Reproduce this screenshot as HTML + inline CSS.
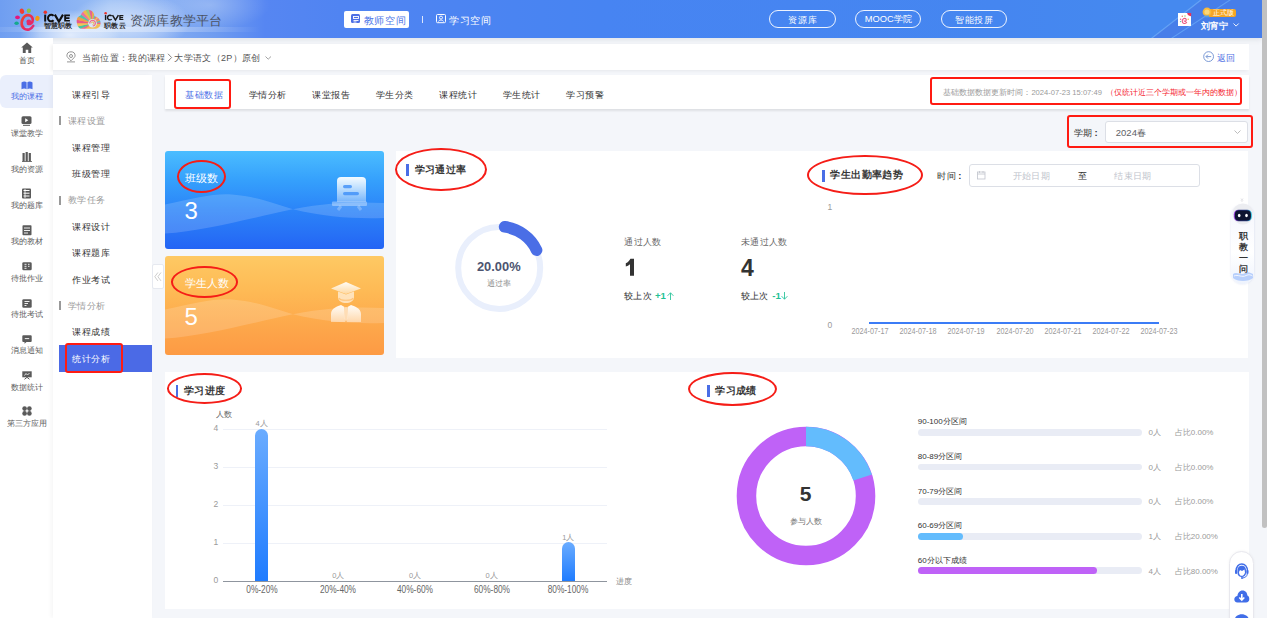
<!DOCTYPE html>
<html><head><meta charset="utf-8"><style>
html,body{margin:0;padding:0;width:1267px;height:618px;overflow:hidden;background:#f4f6fa;font-family:"Liberation Sans",sans-serif}
.t{position:absolute;white-space:nowrap;line-height:1}
.r{position:absolute}
svg.r{overflow:visible}
</style></head><body>
<div class="r" style="left:0;top:0;width:1262px;height:38px;background:linear-gradient(90deg,#6f9ef1 0px,#84aef3 50px,#98bdf5 110px,#84adf3 160px,#6f9cf0 215px,#5686f2 265px,#5084f2 340px,#4784f2 600px,#4586f0 1000px,#4589ef 1150px,#4589ef 1262px);overflow:hidden;box-shadow:0 2px 5px rgba(60,70,90,.10)">
<div style="position:absolute;left:20px;top:10px;width:100px;height:50px;border-radius:50%;background:radial-gradient(closest-side,rgba(255,255,255,.75),rgba(255,255,255,.4) 60%,rgba(255,255,255,0))"></div>
<div style="position:absolute;left:70px;top:-8px;width:120px;height:60px;border-radius:50%;background:radial-gradient(closest-side,rgba(255,255,255,.55),rgba(255,255,255,.25) 65%,rgba(255,255,255,0))"></div>
<div style="position:absolute;left:150px;top:-20px;width:120px;height:50px;border-radius:50%;background:radial-gradient(closest-side,rgba(255,255,255,.25),rgba(255,255,255,0))"></div>
<div style="position:absolute;left:-20px;top:27px;width:280px;height:5px;background:linear-gradient(90deg,rgba(255,255,255,0),rgba(255,255,255,.3) 30%,rgba(255,255,255,.3) 70%,rgba(255,255,255,0))"></div>
<div style="position:absolute;left:0;top:0;width:1262px;height:38px;background:#477ee9;clip-path:polygon(1201px 0,1262px 0,1262px 38px,1152px 38px)"></div>
<div style="position:absolute;left:0;top:0;width:1262px;height:38px;background:rgba(140,200,255,.45);clip-path:polygon(1200px 0,1202px 0,1153px 38px,1151px 38px)"></div>
<div style="position:absolute;left:0;top:0;width:1262px;height:38px;background:rgba(120,190,255,.5);clip-path:polygon(1229px 0,1231px 0,1173px 38px,1171px 38px)"></div>
</div>
<svg class="r" style="left:12px;top:6px;" width="34" height="27" viewBox="0 0 34 27"><defs><linearGradient id="eg" x1="0" y1="0" x2="1" y2="1"><stop offset="0" stop-color="#ef4a28"/><stop offset=".6" stop-color="#e8285e"/><stop offset="1" stop-color="#e0307a"/></linearGradient></defs>
<ellipse cx="9.9" cy="5.3" rx="2.2" ry="2.7" transform="rotate(-20 9.9 5.3)" fill="#ee3f35"/>
<ellipse cx="16.8" cy="4.8" rx="2.1" ry="2.3" fill="#8dc341"/>
<ellipse cx="5.5" cy="11.4" rx="2.4" ry="1.8" fill="#e4157e"/>
<ellipse cx="25.4" cy="12.4" rx="2.2" ry="2.5" transform="rotate(20 25.4 12.4)" fill="#f59a10"/>
<ellipse cx="4.6" cy="17.2" rx="2.2" ry="1.8" fill="#14a98e"/>
<path d="M21.3 19.8 C19.5 23.5 15 24.8 12 22.5 C8.5 19.8 9 13 13 10 C16.5 7.8 20.8 10 20.8 14 C20.8 17.3 17.8 18.5 16 17.8" fill="none" stroke="url(#eg)" stroke-width="2.6" stroke-linecap="round"/>
<circle cx="16.8" cy="15.8" r="2.4" fill="#e4286a"/></svg>
<svg class="r" style="left:43px;top:9px" width="28" height="14"><g transform="translate(0 0) scale(1)"><circle cx="2.3" cy="3.2" r="1.75" fill="#e8342a"/>
<rect x="1.2" y="5.6" width="2" height="7" fill="#111"/>
<path d="M10.6 6.9 A3.25 3.25 0 1 0 10.6 11.3" fill="none" stroke="#111" stroke-width="2"/>
<path d="M11.8 5.6 L15.9 12.6 L20 5.6" fill="none" stroke="#111" stroke-width="2.1" stroke-linejoin="miter"/>
<path d="M21.2 5.6 H26.9 V7.2 H23.1 V8.3 H26.5 V9.9 H23.1 V11 H26.9 V12.6 H21.2Z" fill="#111"/></g></svg>
<div class="t" style="left:43.8px;top:23.0px;font-size:6.5px;color:#2a2a2a;font-weight:bold;letter-spacing:0.1px;">智慧职教</div>
<svg class="r" style="left:76px;top:9px;" width="26" height="21" viewBox="0 0 26 21"><defs><clipPath id="shc"><path d="M1 14.5 C-.2 10 1.8 7.2 4.6 6.5 C6 2.5 9.5 .4 12.5 .7 C16 1 18.2 3.8 18.4 7.2 C21.5 7.5 24.6 10.5 24.6 14 C24.6 17.8 22 19.8 18.5 19.8 L6 19.8 C3 19.8 1.5 17.5 1 14.5Z"/></clipPath></defs>
<g clip-path="url(#shc)" opacity=".92"><rect x="0" y="0" width="26" height="21" fill="#f3b94a"/><path d="M16.5 14.2 L3.64 29.52 L0.53 26.24Z" fill="#f4b63a"/><path d="M16.5 14.2 L0.63 26.38 L-1.70 22.49Z" fill="#ee5a8a"/><path d="M16.5 14.2 L-1.63 22.65 L-3.06 18.36Z" fill="#3ec09c"/><path d="M16.5 14.2 L-3.03 18.53 L-3.50 14.03Z" fill="#f6c04a"/><path d="M16.5 14.2 L-3.50 14.20 L-2.99 9.70Z" fill="#ec4f80"/><path d="M16.5 14.2 L-3.03 9.87 L-1.55 5.59Z" fill="#f39a3a"/><path d="M16.5 14.2 L-1.63 5.75 L0.74 1.89Z" fill="#45c0a8"/><path d="M16.5 14.2 L0.63 2.02 L3.78 -1.23Z" fill="#ef6a9a"/><path d="M16.5 14.2 L3.64 -1.12 L7.42 -3.62Z" fill="#f5b640"/><path d="M16.5 14.2 L7.27 -3.54 L11.49 -5.16Z" fill="#9ad068"/><path d="M16.5 14.2 L11.32 -5.12 L15.80 -5.79Z" fill="#ea5a8a"/><path d="M16.5 14.2 L15.63 -5.78 L20.14 -5.47Z" fill="#f3a23e"/><path d="M16.5 14.2 L19.97 -5.50 L24.31 -4.21Z" fill="#48bfb0"/><path d="M16.5 14.2 L24.15 -4.28 L28.11 -2.08Z" fill="#ee5a8a"/><path d="M16.5 14.2 L27.97 -2.18 L31.36 0.82Z" fill="#f6c44a"/><path d="M16.5 14.2 L31.25 0.69 L33.91 4.35Z" fill="#eb6a90"/><path d="M16.5 14.2 L33.82 4.20 L35.63 8.35Z" fill="#f0a040"/><path d="M16.5 14.2 L35.57 8.19 L36.44 12.63Z" fill="#47b8c8"/><path d="M16.5 14.2 L36.42 12.46 L36.31 16.98Z" fill="#ef5a8a"/><path d="M16.5 14.2 L36.33 16.81 L35.23 21.20Z" fill="#f4be48"/></g>
<circle cx="16.5" cy="14.2" r="4.3" fill="#d8e8f8"/><path d="M13.8 14.5 A2.8 2.8 0 1 1 16.8 17" stroke="#ef6a8a" stroke-width="1.2" fill="none"/><path d="M15.5 14.2 A1.2 1.2 0 1 1 16.6 15.4" stroke="#f2b53a" stroke-width="1" fill="none"/></svg>
<svg class="r" style="left:103.5px;top:10.5px" width="21" height="12"><g transform="translate(0 0) scale(0.72)"><circle cx="2.3" cy="3.2" r="1.75" fill="#e8342a"/>
<rect x="1.2" y="5.6" width="2" height="7" fill="#1a1a1a"/>
<path d="M10.6 6.9 A3.25 3.25 0 1 0 10.6 11.3" fill="none" stroke="#1a1a1a" stroke-width="2"/>
<path d="M11.8 5.6 L15.9 12.6 L20 5.6" fill="none" stroke="#1a1a1a" stroke-width="2.1" stroke-linejoin="miter"/>
<path d="M21.2 5.6 H26.9 V7.2 H23.1 V8.3 H26.5 V9.9 H23.1 V11 H26.9 V12.6 H21.2Z" fill="#1a1a1a"/></g></svg>
<div class="t" style="left:104.2px;top:23.0px;font-size:6.5px;color:#2a2a2a;font-weight:bold;letter-spacing:0.2px;">职教云</div>
<div class="t" style="left:130.0px;top:14.0px;font-size:13px;color:#4b5263;letter-spacing:0.2px;">资源库教学平台</div>
<div class="r" style="left:344.4px;top:11.0px;width:64.4px;height:16.5px;background:#fff;border-radius:2px"></div>
<div class="r" style="left:351.2px;top:14.4px;width:9.0px;height:9.0px;background:#4d6fe4;border-radius:1.5px"></div>
<svg class="r" style="left:351px;top:14px;" width="10" height="10" viewBox="0 0 10 10"><rect x="2.5" y="2.5" width="5" height="2" fill="none" stroke="#fff" stroke-width=".9"/><path d="M2.5 6.5h5M2.5 8h3" stroke="#fff" stroke-width=".9"/></svg>
<div class="t" style="left:363.8px;top:16.0px;font-size:10px;color:#4f78e8;font-weight:500;letter-spacing:0.7px;">教师空间</div>
<div class="r" style="left:422.0px;top:16.4px;width:1.0px;height:6.7px;background:rgba(255,255,255,.8);"></div>
<svg class="r" style="left:436px;top:14.4px;" width="10" height="9.2" viewBox="0 0 10 9.2"><rect x=".5" y=".5" width="9" height="8.2" rx="1" fill="none" stroke="#fff" stroke-width="1"/><circle cx="5" cy="3.6" r="1.5" fill="none" stroke="#fff" stroke-width=".9"/><path d="M2.5 7.5 C3 5.5 7 5.5 7.5 7.5" fill="none" stroke="#fff" stroke-width=".9"/></svg>
<div class="t" style="left:449.0px;top:16.0px;font-size:10px;color:#fff;font-weight:500;letter-spacing:0.7px;">学习空间</div>
<div class="r" style="left:769.2px;top:10.1px;width:66.7px;height:17.5px;border:1px solid rgba(255,255,255,.9);border-radius:9px;box-sizing:border-box"></div>
<div class="r" style="left:855px;top:10.1px;width:66.1px;height:17.5px;border:1px solid rgba(255,255,255,.9);border-radius:9px;box-sizing:border-box"></div>
<div class="r" style="left:940.6px;top:10.1px;width:66.3px;height:17.5px;border:1px solid rgba(255,255,255,.9);border-radius:9px;box-sizing:border-box"></div>
<div class="t" style="left:788.3px;top:16.0px;font-size:9px;color:#fff;font-weight:500;letter-spacing:0.7px;">资源库</div>
<div class="t" style="left:864.7px;top:15.3px;font-size:9.3px;color:#fff">MOOC<span style="font-size:9px;letter-spacing:.6px;font-weight:500">学院</span></div>
<div class="t" style="left:955.0px;top:16.0px;font-size:9px;color:#fff;font-weight:500;letter-spacing:0.5px;">智能投屏</div>
<div class="r" style="left:1178.0px;top:12.5px;width:13.2px;height:13.3px;background:#fff;"></div>
<svg class="r" style="left:1178px;top:12.5px;" width="13.2" height="13.3" viewBox="0 0 13.2 13.3"><circle cx="4.3" cy="3.3" r=".75" fill="#f07a6a"/><circle cx="7" cy="3" r=".75" fill="#9ad06a"/><circle cx="2.6" cy="6.2" r=".75" fill="#ec5aa0"/><circle cx="10.2" cy="6.3" r=".75" fill="#f5b04a"/><circle cx="2.6" cy="8.6" r=".7" fill="#4cc0a0"/><path d="M8.8 9 C8 10.8 5.5 11 4.6 9.4 C3.6 7.6 4.8 5.4 6.6 5.4 C8.2 5.4 8.8 7 7.8 8 C7 8.8 6 8.2 6.2 7.4" fill="none" stroke="#ea5a82" stroke-width="1.1"/><path d="M9.2 0 H13.2 V3.2 C12 3.2 9.2 2.2 9.2 0Z" fill="#e8325a"/></svg>
<div class="r" style="left:1209.0px;top:8.9px;width:27.4px;height:7.7px;background:#f5a623;border-radius:0 2px 2px 0"></div>
<svg class="r" style="left:1201.5px;top:6.8px;" width="10" height="11" viewBox="0 0 10 11"><circle cx="5" cy="5" r="4.4" fill="#f9b93a"/><circle cx="5" cy="5" r="2.6" fill="#fcd77a"/><path d="M3 8.5 L2.5 10.8 L4 10 L5 10.8 L6 10 L7.5 10.8 L7 8.5z" fill="#5aa0e0"/></svg>
<div class="t" style="left:1212.5px;top:10.0px;font-size:6.5px;color:#fff;">正式版</div>
<div class="t" style="left:1201.0px;top:22.0px;font-size:9px;color:#fff;font-weight:bold;letter-spacing:0.1px;">刘宵宁</div>
<svg class="r" style="left:1233.3px;top:23px;" width="6.2" height="4" viewBox="0 0 6.2 4"><path d="M.5 .5 L3.1 3.1 L5.7 .5" fill="none" stroke="#fff" stroke-width=".9"/></svg>
<div class="r" style="left:1262.2px;top:0.0px;width:4.8px;height:527.7px;background:#c1c1c1;border-radius:0 0 2.5px 2.5px"></div>
<div class="r" style="left:0.0px;top:38.0px;width:53.0px;height:580.0px;background:#fff;"></div>
<div class="r" style="left:0.0px;top:74.6px;width:53.0px;height:33.0px;background:#eaeffc;border-radius:6px 0 0 6px"></div>
<div class="t" style="left:18.5px;top:57.0px;font-size:8px;color:#5c5c5c;">首页</div>
<div class="t" style="left:10.5px;top:93.0px;font-size:8px;color:#4a6ee6;">我的课程</div>
<div class="t" style="left:10.5px;top:130.0px;font-size:8px;color:#5c5c5c;">课堂教学</div>
<div class="t" style="left:10.5px;top:166.0px;font-size:8px;color:#5c5c5c;">我的资源</div>
<div class="t" style="left:10.5px;top:202.0px;font-size:8px;color:#5c5c5c;">我的题库</div>
<div class="t" style="left:10.5px;top:238.0px;font-size:8px;color:#5c5c5c;">我的教材</div>
<div class="t" style="left:10.5px;top:275.0px;font-size:8px;color:#5c5c5c;">待批作业</div>
<div class="t" style="left:10.5px;top:311.0px;font-size:8px;color:#5c5c5c;">待批考试</div>
<div class="t" style="left:10.5px;top:347.0px;font-size:8px;color:#5c5c5c;">消息通知</div>
<div class="t" style="left:10.5px;top:384.0px;font-size:8px;color:#5c5c5c;">数据统计</div>
<div class="t" style="left:6.5px;top:420.0px;font-size:8px;color:#5c5c5c;">第三方应用</div>
<svg class="r" style="left:20.5px;top:42px;" width="12" height="11.5" viewBox="0 0 12 11.5"><path d="M6 .5 L11.8 5.6 L10.2 5.6 L10.2 11 L7.3 11 L7.3 7.8 L4.7 7.8 L4.7 11 L1.8 11 L1.8 5.6 L.2 5.6Z" fill="#5a5a5a"/></svg>
<svg class="r" style="left:20.5px;top:80.5px;" width="12" height="8.5" viewBox="0 0 12 8.5"><path d="M.5 1.5 C2 .3 4.5 .3 5.6 1.3 L5.6 8.2 C4.5 7.3 2 7.3 .5 8.2Z M6.4 1.3 C7.5 .3 10 .3 11.5 1.5 L11.5 8.2 C10 7.3 7.5 7.3 6.4 8.2Z" fill="#4a6ee6"/></svg>
<svg class="r" style="left:21px;top:116px;" width="11" height="10" viewBox="0 0 11 10"><rect x=".5" y=".3" width="10" height="7.8" rx="1.5" fill="#5a5a5a"/><path d="M4.2 2.2 L7.3 4.2 L4.2 6.2Z" fill="#fff"/><rect x="2" y="8.8" width="7" height="1" fill="#5a5a5a"/></svg>
<svg class="r" style="left:21.5px;top:152px;" width="10" height="10" viewBox="0 0 10 10"><rect x=".5" y="1" width="2.2" height="8.5" fill="#5a5a5a"/><rect x="3.6" y="0" width="2.2" height="9.5" fill="#5a5a5a"/><rect x="6.7" y="1" width="2.2" height="8.5" fill="#5a5a5a"/><rect x="0" y="9.2" width="10" height=".8" fill="#5a5a5a"/></svg>
<svg class="r" style="left:21px;top:187.6px;" width="11" height="11" viewBox="0 0 11 11"><rect x="1" y=".5" width="9" height="10" rx="1" fill="#5a5a5a"/><path d="M2.5 2.5h6M2.5 5.2h6M2.5 8h6" stroke="#fff" stroke-width="1"/><path d="M4 1v9" stroke="#fff" stroke-width=".8"/></svg>
<svg class="r" style="left:21.5px;top:224.5px;" width="10" height="10.5" viewBox="0 0 10 10.5"><rect x=".5" y=".3" width="9" height="10" rx=".8" fill="#5a5a5a"/><path d="M2 3h6M2 5.5h6M2 8h4" stroke="#fff" stroke-width=".9"/></svg>
<svg class="r" style="left:21.5px;top:262px;" width="10" height="8.5" viewBox="0 0 10 8.5"><rect x=".3" y=".3" width="9.4" height="8" rx="1.3" fill="#5a5a5a"/><path d="M2.5 2.3h2M2.5 4.3h2M2.5 6.3h2M6 2.3h1.5M6 4.3h1.5" stroke="#fff" stroke-width=".9"/></svg>
<svg class="r" style="left:21.5px;top:298.5px;" width="10" height="9" viewBox="0 0 10 9"><rect x=".3" y=".3" width="9.4" height="8.4" rx="1.3" fill="#5a5a5a"/><path d="M2.5 2.5h5M2.5 4.5h3.5M2.5 6.5h2" stroke="#fff" stroke-width=".9"/></svg>
<svg class="r" style="left:21.5px;top:334.5px;" width="10" height="9" viewBox="0 0 10 9"><path d="M1.3 .3 H8.7 A1 1 0 0 1 9.7 1.3 V6 A1 1 0 0 1 8.7 7 H4.5 L2.5 8.8 V7 H1.3 A1 1 0 0 1 .3 6 V1.3 A1 1 0 0 1 1.3 .3Z" fill="#5a5a5a"/><path d="M2.8 3.6h4.4" stroke="#fff" stroke-width=".9"/></svg>
<svg class="r" style="left:21.5px;top:370.8px;" width="10" height="8.5" viewBox="0 0 10 8.5"><rect x=".3" y=".3" width="9.4" height="6" fill="#5a5a5a"/><path d="M2.5 4.5 L4 2.5 L5.5 4 L7.5 2" stroke="#fff" stroke-width=".8" fill="none"/><path d="M5 6.3 L2.5 8.3M5 6.3 L7.5 8.3" stroke="#5a5a5a" stroke-width="1"/></svg>
<svg class="r" style="left:21.5px;top:406.3px;" width="10" height="10" viewBox="0 0 10 10"><circle cx="2.6" cy="2.6" r="2.3" fill="#5a5a5a"/><circle cx="7.4" cy="2.6" r="2.3" fill="#5a5a5a"/><circle cx="2.6" cy="7.4" r="2.3" fill="#5a5a5a"/><circle cx="7.4" cy="7.4" r="2.3" fill="#5a5a5a"/></svg>
<div class="r" style="left:53.0px;top:44.0px;width:1195.5px;height:26.0px;background:#fff;box-shadow:-2px 1px 3px rgba(0,0,0,.06)"></div>
<svg class="r" style="left:65.8px;top:51.6px;" width="10" height="10.5" viewBox="0 0 10 10.5"><path d="M5 8.8 C2.3 6.2 .9 4.6 .9 3.9 A4.1 4.1 0 0 1 9.1 3.9 C9.1 4.6 7.7 6.2 5 8.8Z" fill="none" stroke="#8a8a8a" stroke-width=".9"/><circle cx="5" cy="4" r="1.5" fill="none" stroke="#8a8a8a" stroke-width=".9"/><path d="M1 9.9h8" stroke="#8a8a8a" stroke-width=".9"/></svg>
<div class="t" style="left:81.7px;top:54.0px;font-size:9px;color:#555;letter-spacing:0.35px;">当前位置：我的课程</div>
<svg class="r" style="left:166.5px;top:53px;" width="6" height="9" viewBox="0 0 6 9"><path d="M1 .8 L4.6 4.5 L1 8.2" fill="none" stroke="#777" stroke-width=".9"/></svg>
<div class="t" style="left:174.2px;top:54.0px;font-size:9px;color:#555;letter-spacing:0.35px;">大学语文（2P）原创</div>
<svg class="r" style="left:264.8px;top:55.5px;" width="6.5" height="4" viewBox="0 0 6.5 4"><path d="M.5 .5 L3.2 3.2 L6 .5" fill="none" stroke="#999" stroke-width=".9"/></svg>
<svg class="r" style="left:1202.8px;top:51px;" width="11.5" height="11.5" viewBox="0 0 11.5 11.5"><circle cx="5.6" cy="5.6" r="4.9" fill="none" stroke="#6d8fd0" stroke-width=".9"/><path d="M8.2 5.6H3.2M5 3.6 L3 5.6 L5 7.6" fill="none" stroke="#6d8fd0" stroke-width=".9"/></svg>
<div class="t" style="left:1217.0px;top:54.0px;font-size:9px;color:#4f70e4;font-weight:500;letter-spacing:0.2px;">返回</div>
<div class="r" style="left:53.0px;top:75.0px;width:99.0px;height:543.0px;background:#fff;box-shadow:-2px 0 4px rgba(0,0,0,.04)"></div>
<div class="r" style="left:59.2px;top:345.3px;width:92.8px;height:26.3px;background:#4b6ae6;"></div>
<div class="t" style="left:72.4px;top:91.0px;font-size:9px;color:#333;letter-spacing:0.5px;">课程引导</div>
<div class="r" style="left:59.4px;top:116.3px;width:1.5px;height:9.0px;background:#999;"></div>
<div class="t" style="left:67.6px;top:117.0px;font-size:9px;color:#9a9a9a;letter-spacing:0.5px;">课程设置</div>
<div class="t" style="left:72.4px;top:144.0px;font-size:9px;color:#333;letter-spacing:0.5px;">课程管理</div>
<div class="t" style="left:72.4px;top:170.0px;font-size:9px;color:#333;letter-spacing:0.5px;">班级管理</div>
<div class="r" style="left:59.4px;top:195.5px;width:1.5px;height:9.0px;background:#999;"></div>
<div class="t" style="left:67.6px;top:196.0px;font-size:9px;color:#9a9a9a;letter-spacing:0.5px;">教学任务</div>
<div class="t" style="left:72.4px;top:223.0px;font-size:9px;color:#333;letter-spacing:0.5px;">课程设计</div>
<div class="t" style="left:72.4px;top:249.0px;font-size:9px;color:#333;letter-spacing:0.5px;">课程题库</div>
<div class="t" style="left:72.4px;top:276.0px;font-size:9px;color:#333;letter-spacing:0.5px;">作业考试</div>
<div class="r" style="left:59.4px;top:301.1px;width:1.5px;height:9.0px;background:#999;"></div>
<div class="t" style="left:67.6px;top:302.0px;font-size:9px;color:#9a9a9a;letter-spacing:0.5px;">学情分析</div>
<div class="t" style="left:72.4px;top:328.0px;font-size:9px;color:#333;letter-spacing:0.5px;">课程成绩</div>
<div class="t" style="left:72.4px;top:355.0px;font-size:9px;color:#fff;letter-spacing:0.5px;">统计分析</div>
<div class="r" style="left:65.4px;top:342.6px;width:57.7px;height:30.7px;border:2.4px solid #ff1b12;border-radius:3px;box-sizing:border-box"></div>
<div class="r" style="left:152.3px;top:264.4px;width:11.8px;height:24.3px;background:#fff;border:1px solid #e6e9f0;border-radius:2px;box-sizing:border-box"></div>
<svg class="r" style="left:153.9px;top:272.3px;" width="8" height="9.5" viewBox="0 0 8 9.5"><path d="M3.9 .5 L.8 4.7 L3.9 8.9M7 .5 L3.9 4.7 L7 8.9" fill="none" stroke="#b8b8b8" stroke-width=".7"/></svg>
<div class="r" style="left:165.0px;top:75.0px;width:1083.5px;height:33.6px;background:#fff;box-shadow:0 1.5px 2px rgba(0,0,0,.09)"></div>
<div class="t" style="left:185.0px;top:91.0px;font-size:9px;color:#4a6ee6;letter-spacing:0.55px;">基础数据</div>
<div class="t" style="left:248.5px;top:91.0px;font-size:9px;color:#333;letter-spacing:0.55px;">学情分析</div>
<div class="t" style="left:312.0px;top:91.0px;font-size:9px;color:#333;letter-spacing:0.55px;">课堂报告</div>
<div class="t" style="left:375.5px;top:91.0px;font-size:9px;color:#333;letter-spacing:0.55px;">学生分类</div>
<div class="t" style="left:439.0px;top:91.0px;font-size:9px;color:#333;letter-spacing:0.55px;">课程统计</div>
<div class="t" style="left:502.5px;top:91.0px;font-size:9px;color:#333;letter-spacing:0.55px;">学生统计</div>
<div class="t" style="left:566.0px;top:91.0px;font-size:9px;color:#333;letter-spacing:0.55px;">学习预警</div>
<div class="r" style="left:173.8px;top:78.8px;width:57.0px;height:30.4px;border:2.4px solid #ff1b12;border-radius:3px;box-sizing:border-box"></div>
<div class="t" style="left:943.4px;top:88.8px;font-size:8px;color:#9a9a9a;">基础数据数据更新时间：<span style="font-size:7.6px">2024-07-23 15:07:49</span> <span style="color:#f5222d;margin-left:2px">（仅统计近三个学期或一年内的数据）</span></div>
<div class="r" style="left:930.0px;top:77.2px;width:312.2px;height:28.3px;border:2.4px solid #ff1b12;border-radius:3px;box-sizing:border-box"></div>
<div class="t" style="left:1073.6px;top:129.0px;font-size:9px;color:#333;font-weight:500;letter-spacing:0.4px;">学期</div>
<div class="t" style="left:1094.5px;top:127.6px;font-size:9.5px;color:#333;font-weight:bold">:</div>
<div class="r" style="left:1105.3px;top:120.6px;width:142.9px;height:22.8px;background:#fff;border:1px solid #dcdfe6;border-radius:3px;box-sizing:border-box"></div>
<div class="t" style="left:1115.8px;top:128px;font-size:9.5px;color:#606266">2024<span style="font-size:9px">春</span></div>
<svg class="r" style="left:1233.5px;top:129.8px;" width="7" height="4.5" viewBox="0 0 7 4.5"><path d="M.5 .5 L3.5 3.5 L6.5 .5" fill="none" stroke="#b4b4b4" stroke-width=".9"/></svg>
<div class="r" style="left:1066.6px;top:115.2px;width:186.8px;height:33.3px;border:2.4px solid #ff1b12;border-radius:3px;box-sizing:border-box"></div>
<div class="r" style="left:165px;top:150.7px;width:218.7px;height:98.0px;border-radius:3px;overflow:hidden;background:linear-gradient(180deg,#4bbdff 0%,#35a0fc 30%,#2b84f8 60%,#2771f6 85%,#2364f5 100%)">
<svg width="219" height="98" style="position:absolute;left:0;top:0" viewBox="0 0 219 98" preserveAspectRatio="none">
<path d="M0 53.5 C30 47 50 42 67 43.5 C95 46 110 53 129 58.5 C160 66 190 68 219 67 L219 52 C195 51 165 51 129 58 C90 66 40 80 0 82.5Z" fill="rgba(255,255,255,.16)"/>
</svg></div>
<div class="t" style="left:185.1px;top:173.0px;font-size:11px;color:#fff;">班级数</div>
<div class="t" style="left:184.6px;top:199px;font-size:24px;color:#fff">3</div>
<div class="r" style="left:165px;top:256.3px;width:218.7px;height:98.4px;border-radius:3px;overflow:hidden;background:linear-gradient(180deg,#fec963 0%,#feba55 35%,#fda84b 70%,#fd9a44 100%)">
<svg width="219" height="98" style="position:absolute;left:0;top:0" viewBox="0 0 219 98" preserveAspectRatio="none">
<path d="M0 53.5 C30 47 50 42 67 43.5 C95 46 110 53 129 58.5 C160 66 190 68 219 67 L219 52 C195 51 165 51 129 58 C90 66 40 80 0 82.5Z" fill="rgba(255,255,255,.16)"/>
</svg></div>
<div class="t" style="left:184.5px;top:278.0px;font-size:11px;color:#fff;">学生人数</div>
<div class="t" style="left:184.6px;top:305px;font-size:24px;color:#fff">5</div>
<svg class="r" style="left:331px;top:176px;" width="37" height="35" viewBox="0 0 37 35"><defs><linearGradient id="bg1" x1="0" y1="0" x2="0" y2="1"><stop offset="0" stop-color="#fff" stop-opacity=".95"/><stop offset="1" stop-color="#fff" stop-opacity=".35"/></linearGradient></defs>
<path d="M6 5 Q6 1 10 1 L31 1 Q35 1 35 5 L35 26 L6 26Z" fill="url(#bg1)"/>
<rect x="12" y="9" width="9" height="3.2" rx="1.6" fill="#3d8ff8" opacity=".8"/><rect x="12" y="16" width="16" height="3.2" rx="1.6" fill="#3d8ff8" opacity=".8"/>
<rect x="1" y="25.5" width="35" height="4.5" rx="1" fill="#fff" opacity=".35"/>
<path d="M10 30 L7 34 M27 30 L30 34" stroke="#fff" stroke-opacity=".25" stroke-width="3"/></svg>
<svg class="r" style="left:330px;top:281px;" width="32" height="42" viewBox="0 0 32 42"><defs><linearGradient id="bg2" x1="0" y1="0" x2="0" y2="1"><stop offset="0" stop-color="#fff" stop-opacity=".95"/><stop offset="1" stop-color="#fff" stop-opacity=".45"/></linearGradient></defs>
<path d="M1 7.5 L16 1 L31 7.5 L16 13Z" fill="url(#bg2)"/>
<path d="M8 10.5 L8 16 C8 24 24 24 24 16 L24 10.5 L16 13.5Z" fill="#fff" opacity=".6"/>
<path d="M9 17 C10 20 22 20 23 17" fill="none" stroke="#fdb050" stroke-width="1.2" opacity=".6"/>
<path d="M1 41 L1 33 C1 27 8 25 11 24 L14.5 26 L15 41Z M31 41 L31 33 C31 27 24 25 21 24 L17.5 26 L17 41Z" fill="url(#bg2)"/>
<path d="M15 26 L17 26 L17.5 38 L16 41 L14.5 38Z" fill="#fff" opacity=".5"/></svg>
<div class="r" style="left:177.3px;top:160.4px;width:48.6px;height:33.0px;border:2.5px solid #f51d17;border-radius:50%;box-sizing:border-box"></div>
<div class="r" style="left:170.9px;top:266.4px;width:67.6px;height:32.0px;border:2.5px solid #f51d17;border-radius:50%;box-sizing:border-box"></div>
<div class="r" style="left:395.8px;top:150.9px;width:852.7px;height:207.4px;background:#fff;"></div>
<div class="r" style="left:406.2px;top:163.7px;width:2.7px;height:12.0px;background:#4a6ee6;"></div>
<div class="t" style="left:414.5px;top:165.0px;font-size:10px;color:#383838;font-weight:bold;letter-spacing:0.4px;">学习通过率</div>
<div class="r" style="left:395.0px;top:147.8px;width:91.6px;height:43.2px;border:2.5px solid #f51d17;border-radius:50%;box-sizing:border-box"></div>
<svg class="r" style="left:440px;top:210px;" width="120" height="120" viewBox="0 0 120 120"><circle cx="59.19999999999999" cy="57.89999999999998" r="41" fill="none" stroke="#e9effc" stroke-width="6"/><path d="M64.60 16.85 A41.4 41.4 0 0 1 96.60 40.14" fill="none" stroke="#4a6ee6" stroke-width="11.6" stroke-linecap="round"/></svg>
<div class="t" style="left:476.9px;top:261px;font-size:12.9px;font-weight:bold;color:#4d5470">20.00%</div>
<div class="t" style="left:487.2px;top:280.0px;font-size:8px;color:#8a8a8a;">通过率</div>
<div class="t" style="left:624.2px;top:238.0px;font-size:9px;color:#666;letter-spacing:0.35px;">通过人数</div>
<svg class="r" style="left:620px;top:255px;" width="20" height="25" viewBox="0 0 20 25"><path d="M14 3.8 L14 20.8 L10 20.8 L10 9.2 C8.8 10.3 7.3 11.1 5.8 11.6 L5.8 8.3 C8 7.3 9.6 5.6 10.4 3.8 Z" fill="#333"/></svg>
<div class="t" style="left:624.2px;top:292.0px;font-size:9px;color:#333;letter-spacing:0.2px;">较上次</div>
<div class="t" style="left:655px;top:291.2px;font-size:9.6px;font-weight:bold;color:#1fc296">+1</div>
<svg class="r" style="left:667.3px;top:291.5px;" width="7" height="8" viewBox="0 0 7 8"><path d="M3.5 8 V.8 M.6 3.8 L3.5 .8 L6.4 3.8" fill="none" stroke="#2ec49c" stroke-width=".9"/></svg>
<div class="t" style="left:741.0px;top:238.0px;font-size:9px;color:#666;letter-spacing:0.35px;">未通过人数</div>
<div class="t" style="left:741px;top:257.2px;font-size:23px;font-weight:bold;color:#333">4</div>
<div class="t" style="left:741.0px;top:292.0px;font-size:9px;color:#333;letter-spacing:0.2px;">较上次</div>
<div class="t" style="left:772.3px;top:291.2px;font-size:9.6px;font-weight:bold;color:#1fc296">-1</div>
<svg class="r" style="left:780.6px;top:291.5px;" width="7" height="8" viewBox="0 0 7 8"><path d="M3.5 0 V7.2 M.6 4.2 L3.5 7.2 L6.4 4.2" fill="none" stroke="#2ec49c" stroke-width=".9"/></svg>
<div class="r" style="left:822.1px;top:169.6px;width:2.7px;height:12.0px;background:#4a6ee6;"></div>
<div class="t" style="left:830.4px;top:170.0px;font-size:10px;color:#383838;font-weight:bold;letter-spacing:0.4px;">学生出勤率趋势</div>
<div class="r" style="left:807.1px;top:154.7px;width:116.0px;height:40.3px;border:2.5px solid #f51d17;border-radius:50%;box-sizing:border-box"></div>
<div class="t" style="left:937.3px;top:172.0px;font-size:9px;color:#333;font-weight:500;letter-spacing:0.4px;">时间</div>
<div class="t" style="left:958.3px;top:170.6px;font-size:9.5px;color:#333;font-weight:bold">:</div>
<div class="r" style="left:969px;top:164px;width:230.6px;height:23px;background:#fff;border:1px solid #dcdfe6;border-radius:3px;box-sizing:border-box"></div>
<svg class="r" style="left:976.5px;top:171px;" width="8.5" height="8.5" viewBox="0 0 8.5 8.5"><rect x=".5" y="1" width="7.5" height="7" fill="none" stroke="#c0c4cc" stroke-width=".8"/><path d="M.5 3h7.5M2.5 0v2M6 0v2" stroke="#c0c4cc" stroke-width=".8"/></svg>
<div class="t" style="left:1012.6px;top:172.0px;font-size:9px;color:#c0c4cc;letter-spacing:0.35px;">开始日期</div>
<div class="t" style="left:1077.7px;top:172.0px;font-size:9px;color:#333;">至</div>
<div class="t" style="left:1114.4px;top:172.0px;font-size:9px;color:#c0c4cc;letter-spacing:0.35px;">结束日期</div>
<div class="t" style="left:827.6px;top:202.6px;font-size:8.5px;color:#9a9a9a">1</div>
<div class="t" style="left:827.6px;top:321.1px;font-size:8.5px;color:#9a9a9a">0</div>
<div class="r" style="left:869.3px;top:321.7px;width:290.0px;height:2.0px;background:#3b7cf6;"></div>
<div class="t" style="left:839.7px;top:326.3px;font-size:9.5px;color:#9a9a9a;width:60px;text-align:center;transform:scaleX(.76)">2024-07-17</div>
<div class="t" style="left:888.0px;top:326.3px;font-size:9.5px;color:#9a9a9a;width:60px;text-align:center;transform:scaleX(.76)">2024-07-18</div>
<div class="t" style="left:936.2px;top:326.3px;font-size:9.5px;color:#9a9a9a;width:60px;text-align:center;transform:scaleX(.76)">2024-07-19</div>
<div class="t" style="left:984.5px;top:326.3px;font-size:9.5px;color:#9a9a9a;width:60px;text-align:center;transform:scaleX(.76)">2024-07-20</div>
<div class="t" style="left:1032.7px;top:326.3px;font-size:9.5px;color:#9a9a9a;width:60px;text-align:center;transform:scaleX(.76)">2024-07-21</div>
<div class="t" style="left:1081.0px;top:326.3px;font-size:9.5px;color:#9a9a9a;width:60px;text-align:center;transform:scaleX(.76)">2024-07-22</div>
<div class="t" style="left:1129.2px;top:326.3px;font-size:9.5px;color:#9a9a9a;width:60px;text-align:center;transform:scaleX(.76)">2024-07-23</div>
<div class="r" style="left:165.0px;top:371.8px;width:1083.5px;height:237.2px;background:#fff;"></div>
<div class="r" style="left:175.6px;top:384.9px;width:2.7px;height:12.0px;background:#4a6ee6;"></div>
<div class="t" style="left:183.9px;top:386.0px;font-size:10px;color:#383838;font-weight:bold;letter-spacing:0.4px;">学习进度</div>
<div class="r" style="left:166.5px;top:373.0px;width:75.8px;height:31.0px;border:2.5px solid #f51d17;border-radius:50%;box-sizing:border-box"></div>
<div class="t" style="left:216.0px;top:411.0px;font-size:8px;color:#666;">人数</div>
<div class="t" style="left:198.3px;width:20px;text-align:right;top:575.9px;font-size:8.5px;color:#9a9a9a">0</div>
<div class="t" style="left:198.3px;width:20px;text-align:right;top:538.0px;font-size:8.5px;color:#9a9a9a">1</div>
<div class="r" style="left:223.0px;top:542.7px;width:383.7px;height:1.0px;background:#eef1f8;"></div>
<div class="t" style="left:198.3px;width:20px;text-align:right;top:500.1px;font-size:8.5px;color:#9a9a9a">2</div>
<div class="r" style="left:223.0px;top:504.8px;width:383.7px;height:1.0px;background:#eef1f8;"></div>
<div class="t" style="left:198.3px;width:20px;text-align:right;top:462.2px;font-size:8.5px;color:#9a9a9a">3</div>
<div class="r" style="left:223.0px;top:466.9px;width:383.7px;height:1.0px;background:#eef1f8;"></div>
<div class="t" style="left:198.3px;width:20px;text-align:right;top:424.3px;font-size:8.5px;color:#9a9a9a">4</div>
<div class="r" style="left:223.0px;top:429.0px;width:383.7px;height:1.0px;background:#eef1f8;"></div>
<div class="r" style="left:223.0px;top:580.6px;width:383.7px;height:1.0px;background:#8f959e;"></div>
<div class="t" style="left:231.7px;top:584.6px;width:60px;text-align:center;font-size:10px;color:#666;transform:scaleX(.83)">0%-20%</div>
<div class="r" style="left:255.1px;top:428.7px;width:13.2px;height:152.4px;border-radius:6.6px 6.6px 0 0;background:linear-gradient(180deg,#6aacff,#1f7cff)"></div>
<div class="t" style="left:246.7px;top:419.9px;width:30px;text-align:center;font-size:7.5px;color:#9a9a9a">4人</div>
<div class="t" style="left:308.4px;top:584.6px;width:60px;text-align:center;font-size:10px;color:#666;transform:scaleX(.83)">20%-40%</div>
<div class="t" style="left:323.4px;top:572.3px;width:30px;text-align:center;font-size:7.5px;color:#9a9a9a">0人</div>
<div class="t" style="left:385.0px;top:584.6px;width:60px;text-align:center;font-size:10px;color:#666;transform:scaleX(.83)">40%-60%</div>
<div class="t" style="left:400.0px;top:572.3px;width:30px;text-align:center;font-size:7.5px;color:#9a9a9a">0人</div>
<div class="t" style="left:461.6px;top:584.6px;width:60px;text-align:center;font-size:10px;color:#666;transform:scaleX(.83)">60%-80%</div>
<div class="t" style="left:476.6px;top:572.3px;width:30px;text-align:center;font-size:7.5px;color:#9a9a9a">0人</div>
<div class="t" style="left:538.3px;top:584.6px;width:60px;text-align:center;font-size:10px;color:#666;transform:scaleX(.83)">80%-100%</div>
<div class="r" style="left:561.7px;top:542.4px;width:13.2px;height:38.7px;border-radius:6.6px 6.6px 0 0;background:linear-gradient(180deg,#6aacff,#1f7cff)"></div>
<div class="t" style="left:553.3px;top:533.6px;width:30px;text-align:center;font-size:7.5px;color:#9a9a9a">1人</div>
<div class="t" style="left:616.4px;top:578.0px;font-size:8px;color:#888;">进度</div>
<div class="r" style="left:707.0px;top:384.8px;width:2.7px;height:12.0px;background:#4a6ee6;"></div>
<div class="t" style="left:715.3px;top:386.0px;font-size:10px;color:#383838;font-weight:bold;letter-spacing:0.4px;">学习成绩</div>
<div class="r" style="left:688.3px;top:371.6px;width:89.2px;height:34.1px;border:2.5px solid #f51d17;border-radius:50%;box-sizing:border-box"></div>
<svg class="r" style="left:730px;top:420px;" width="152" height="152" viewBox="0 0 152 152"><circle cx="76" cy="76" r="59.55" fill="none" stroke="#bf62f7" stroke-width="19.5"/><path d="M76 16.450000000000003 A59.55 59.55 0 0 1 132.64 57.60" fill="none" stroke="#63bcfd" stroke-width="19.5"/></svg>
<div class="t" style="left:799.8px;top:483px;font-size:21px;font-weight:bold;color:#333">5</div>
<div class="t" style="left:790.2px;top:518.0px;font-size:8px;color:#777;">参与人数</div>
<div class="t" style="left:917.8px;top:418.3px;font-size:8px;color:#333">90-100分区间</div>
<div class="r" style="left:918.0px;top:429.0px;width:224.0px;height:6.9px;background:#e9ecf5;border-radius:3.5px"></div>
<div class="t" style="left:1148.4px;top:429.2px;font-size:8px;color:#9a9a9a">0人</div>
<div class="t" style="left:1174.8px;top:429.2px;font-size:8px;color:#9a9a9a">占比0.00%</div>
<div class="t" style="left:917.8px;top:452.9px;font-size:8px;color:#333">80-89分区间</div>
<div class="r" style="left:918.0px;top:463.6px;width:224.0px;height:6.9px;background:#e9ecf5;border-radius:3.5px"></div>
<div class="t" style="left:1148.4px;top:463.8px;font-size:8px;color:#9a9a9a">0人</div>
<div class="t" style="left:1174.8px;top:463.8px;font-size:8px;color:#9a9a9a">占比0.00%</div>
<div class="t" style="left:917.8px;top:487.5px;font-size:8px;color:#333">70-79分区间</div>
<div class="r" style="left:918.0px;top:498.2px;width:224.0px;height:6.9px;background:#e9ecf5;border-radius:3.5px"></div>
<div class="t" style="left:1148.4px;top:498.4px;font-size:8px;color:#9a9a9a">0人</div>
<div class="t" style="left:1174.8px;top:498.4px;font-size:8px;color:#9a9a9a">占比0.00%</div>
<div class="t" style="left:917.8px;top:522.1px;font-size:8px;color:#333">60-69分区间</div>
<div class="r" style="left:918.0px;top:532.8px;width:224.0px;height:6.9px;background:#e9ecf5;border-radius:3.5px"></div>
<div class="r" style="left:918.0px;top:532.8px;width:44.8px;height:6.9px;background:#63bcfd;border-radius:3.5px"></div>
<div class="t" style="left:1148.4px;top:533.0px;font-size:8px;color:#9a9a9a">1人</div>
<div class="t" style="left:1174.8px;top:533.0px;font-size:8px;color:#9a9a9a">占比20.00%</div>
<div class="t" style="left:917.8px;top:556.7px;font-size:8px;color:#333">60分以下成绩</div>
<div class="r" style="left:918.0px;top:567.4px;width:224.0px;height:6.9px;background:#e9ecf5;border-radius:3.5px"></div>
<div class="r" style="left:918.0px;top:567.4px;width:179.2px;height:6.9px;background:#bf62f7;border-radius:3.5px"></div>
<div class="t" style="left:1148.4px;top:567.6px;font-size:8px;color:#9a9a9a">4人</div>
<div class="t" style="left:1174.8px;top:567.6px;font-size:8px;color:#9a9a9a">占比80.00%</div>
<div class="r" style="left:1231px;top:204.6px;width:23.3px;height:79.4px;border-radius:12px;background:linear-gradient(180deg,#f4f6fd,#fff 60%,#eef3fd);box-shadow:0 0 2px rgba(120,130,200,.25)"></div>
<svg class="r" style="left:1231px;top:197px;" width="24" height="30" viewBox="0 0 24 30"><defs><linearGradient id="vis" x1="0" x2="1"><stop offset="0" stop-color="#b04cf0"/><stop offset=".3" stop-color="#2a2f7a"/><stop offset=".7" stop-color="#2a3f8a"/><stop offset="1" stop-color="#38d0e8"/></linearGradient></defs><path d="M11 5 L11 2.5 M10 1.5 L12 3.5 M12 1.5 L10 3.5" stroke="#d8d8de" stroke-width=".7" fill="none"/><circle cx="11.85" cy="17" r="10.5" fill="#ecedf1"/><rect x="2.8" y="12.7" width="18.1" height="11.6" rx="4.6" fill="url(#vis)"/><rect x="3.8" y="13.6" width="16.1" height="9.8" rx="3.9" fill="#0e1430"/><ellipse cx="8.2" cy="18.5" rx="1.3" ry="1.8" fill="#fff"/><ellipse cx="15.5" cy="18.5" rx="1.3" ry="1.8" fill="#fff"/></svg>
<div class="t" style="left:1238.8px;top:232.0px;font-size:9px;color:#333;font-weight:bold;">职</div>
<div class="t" style="left:1238.8px;top:243.0px;font-size:9px;color:#333;font-weight:bold;">教</div>
<div class="t" style="left:1238.8px;top:254.0px;font-size:9px;color:#333;font-weight:bold;">一</div>
<div class="t" style="left:1238.8px;top:265.0px;font-size:9px;color:#333;font-weight:bold;">问</div>
<svg class="r" style="left:1232px;top:270px;" width="22" height="12" viewBox="0 0 22 12"><path d="M1 4 C5 1 9 6 13 3 C16 1 19 3 21 4 L21 8 C17 12 5 12 1 8Z" fill="#a9c6fb" opacity=".8"/><path d="M2 6 C6 4 10 8 14 5.5 C17 4 19 5 20.5 6" stroke="#fff" stroke-width="1" fill="none" opacity=".8"/></svg>
<div class="r" style="left:1229px;top:550.7px;width:25px;height:80px;border-radius:12.5px;background:#fff;border:1px solid #e8e8ee;box-sizing:border-box;box-shadow:0 0 3px rgba(0,0,0,.05)"></div>
<svg class="r" style="left:1234.3px;top:562.5px;" width="15.5" height="16" viewBox="0 0 15.5 16"><path d="M2 8.5 C2 3 5 1 7.8 1 C10.5 1 13.5 3 13.5 8.5" fill="none" stroke="#416ee8" stroke-width="1.6"/><path d="M3.5 7.5 C3.5 4 5.5 2.8 7.8 2.8 C10 2.8 12 4 12 7.5 L12 10 C12 12.5 10 14 7.8 14 C5.5 14 3.5 12.5 3.5 10Z" fill="#416ee8"/><path d="M5 9 L6 7 L8 8 L10.5 6.5 L11 9.5 C10.5 12 9 12.8 7.8 12.8 C6.3 12.8 5 12 5 9Z" fill="#fff"/><rect x="1" y="7" width="2.2" height="4" rx="1" fill="#416ee8"/><rect x="12.3" y="7" width="2.2" height="4" rx="1" fill="#416ee8"/><path d="M13.3 11 C13 13.5 11 14.8 8.5 15" stroke="#416ee8" stroke-width="1" fill="none"/><circle cx="8" cy="15" r="1" fill="#416ee8"/></svg>
<svg class="r" style="left:1234.3px;top:589.5px;" width="15.5" height="13" viewBox="0 0 15.5 13"><path d="M3.5 12.5 C1.3 12.5 .3 10.8 .3 9.2 C.3 7.3 1.8 6 3.4 6 C3.6 3 5.6 .5 8.5 .5 C11.6 .5 13.3 3 13.4 5.6 C14.6 6 15.3 7.5 15.3 9 C15.3 11 14 12.5 12 12.5Z" fill="#416ee8"/><path d="M7.8 4 V9.5 M5.3 7.5 L7.8 10 L10.3 7.5" stroke="#fff" stroke-width="1.6" fill="none"/></svg>
<svg class="r" style="left:1234.3px;top:613.5px;" width="15.5" height="6" viewBox="0 0 15.5 6"><path d="M.5 6 C1 2.5 4 .3 7.75 .3 C11.5 .3 14.5 2.5 15 6Z" fill="#416ee8"/></svg>
</body></html>
